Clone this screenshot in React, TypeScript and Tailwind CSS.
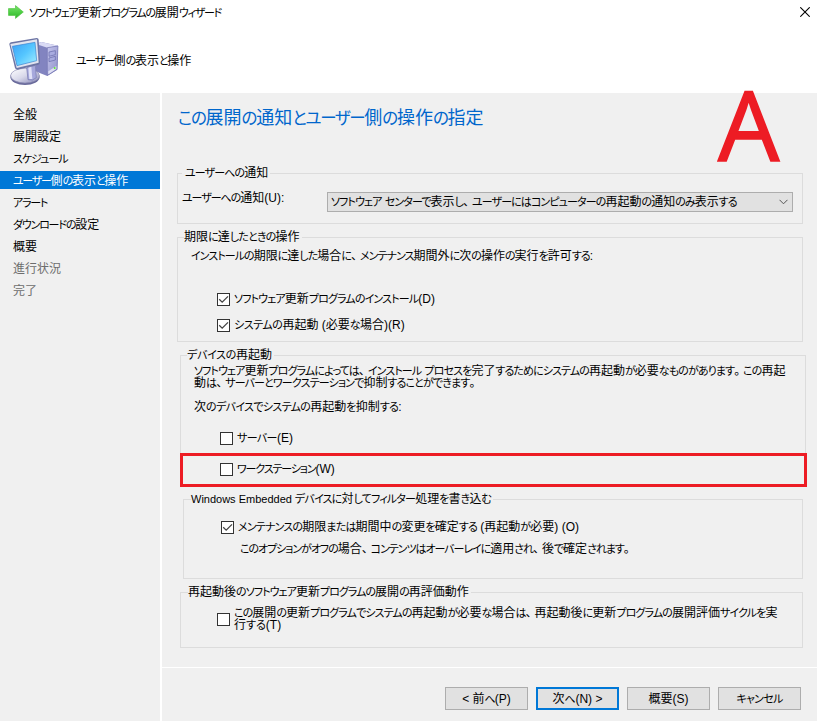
import type { ReactNode } from "react";

const steps = [
  { label: "全般", track: "", state: "done" },
  { label: "展開設定", track: "", state: "done" },
  { label: "スケジュール", track: "tracking-[-1px]", state: "done" },
  { label: "ユーザー側の表示と操作", track: "tracking-[-1.3px]", state: "current" },
  { label: "アラート", track: "tracking-[-1.2px]", state: "done" },
  { label: "ダウンロードの設定", track: "tracking-[-1.2px]", state: "done" },
  { label: "概要", track: "", state: "done" },
  { label: "進行状況", track: "", state: "pending" },
  { label: "完了", track: "", state: "pending" },
];

const stepStyles: Record<string, string> = {
  done: "text-black",
  current: "bg-[#0078d7] text-white",
  pending: "text-[#6d6d6d]",
};

// Kana are set narrower than kanji, as in a proportional UI gothic.
function Ja({ text, track = "" }: { text: string; track?: string }) {
  return (
    <>
      {text.split(/([\u3041-\u30ff]+|[、。])/).map((part, i) => {
        if (part === "、" || part === "。") {
          return (
            <span key={i} className="tracking-[-3px]">
              {part}
            </span>
          );
        }
        return i % 2 ? (
          <span key={i} className={`text-[0.917em] [font-feature-settings:'palt'] ${track}`}>
            {part}
          </span>
        ) : (
          part
        );
      })}
    </>
  );
}

function Group({
  title,
  className,
  children,
}: {
  title: ReactNode;
  className: string;
  children: ReactNode;
}) {
  return (
    <section className={`border border-[#dcdcdc] ${className}`}>
      <h2 className="-mt-2 h-[14px] w-fit bg-[#f0f0f0] pr-0.5 leading-[14px]">{title}</h2>
      {children}
    </section>
  );
}

function Check({
  checked = false,
  className = "",
  children,
}: {
  checked?: boolean;
  className?: string;
  children: ReactNode;
}) {
  return (
    <label className={`flex items-center gap-1 ${className}`}>
      <span className="flex size-[13px] shrink-0 items-center justify-center border border-[#333] bg-white">
        {checked && (
          <svg viewBox="0 0 11 11" className="size-[11px]" fill="none" stroke="#444" strokeWidth="1.3">
            <path d="M1.2 5.2 4.2 8.2 10 2.4" />
          </svg>
        )}
      </span>
      <span className="-mt-px leading-3">{children}</span>
    </label>
  );
}

function ArrowIcon() {
  return (
    <svg viewBox="0 0 16 14" className="h-[14px] w-4">
      <defs>
        <linearGradient id="arrow" x1="0" y1="0" x2="0" y2="1">
          <stop offset="0" stopColor="#7be06a" />
          <stop offset=".5" stopColor="#4fd046" />
          <stop offset="1" stopColor="#2fb32a" />
        </linearGradient>
      </defs>
      <path d="M.5 3.6h7V.6L15.3 7l-7.8 6.4V10.4h-7z" fill="url(#arrow)" stroke="#55c648" strokeWidth=".7" />
    </svg>
  );
}

function ComputerIcon() {
  return (
    <svg viewBox="0 0 210 195" className="h-[65px] w-[70px]">
      <defs>
        <linearGradient id="screen" x1="0" y1="0" x2="1" y2="1">
          <stop offset="0" stopColor="#3b9ff5" />
          <stop offset=".5" stopColor="#55c6ff" />
          <stop offset="1" stopColor="#a5f0ff" />
        </linearGradient>
        <linearGradient id="front" x1="0" y1="0" x2="1" y2="1">
          <stop offset="0" stopColor="#c5c6ee" />
          <stop offset="1" stopColor="#8f90c8" />
        </linearGradient>
        <linearGradient id="base" x1="0" y1="0" x2="1" y2="1">
          <stop offset="0" stopColor="#fff" />
          <stop offset=".5" stopColor="#d8d8ea" />
          <stop offset="1" stopColor="#8586b6" />
        </linearGradient>
      </defs>
      <path d="M108 42 124 36 174 47 172 119 142 138 106 124z" fill="#8284c0" />
      <path d="M108 42 124 36 174 47 142 53z" fill="#dadbf5" />
      <path d="M142 53 174 48 171 118 142 136z" fill="url(#front)" stroke="#7577b2" strokeWidth="2" />
      <path d="M147 66 166 62V74L147 79zM147 84 166 79V90L147 95z" fill="#a9ace0" stroke="#6467a8" strokeWidth="2" />
      <path d="M145 124 169 108V117L145 133z" fill="#dedff2" />
      <circle cx="164" cy="114" r="3" fill="#5ee833" />
      <ellipse cx="75" cy="141" rx="44" ry="24" fill="#696a9b" />
      <ellipse cx="75" cy="137" rx="43" ry="22" fill="url(#base)" stroke="#9293b8" strokeWidth="2" />
      <path d="M80 113 106 106 109 143Q98 154 84 149z" fill="#a6a8dc" stroke="#7375aa" strokeWidth="2" />
      <path d="M85 113 94 110 97 147H88z" fill="#e0e1f7" />
      <path d="M28 43Q28 38 33 37L110 24Q116 24 116 29L120 97Q120 102 115 104L53 119Q47 119 45 114z" fill="#6c74a4" />
      <path d="M31 42 111 28 116 98 50 114z" fill="#e1e4ef" />
      <path d="M37 49 105 37 110 92 51 107z" fill="url(#screen)" stroke="#3d83ce" strokeWidth="2" />
    </svg>
  );
}

function Button({ primary = false, children }: { primary?: boolean; children: ReactNode }) {
  return (
    <button
      type="button"
      className={`flex h-[23px] w-[83px] items-center justify-center whitespace-pre bg-[#e1e1e1] leading-3 ${
        primary ? "border-2 border-[#0078d7]" : "border border-[#adadad]"
      }`}
    >
      {children}
    </button>
  );
}

export default function App() {
  return (
    <div className="relative flex h-[725px] w-[817px] flex-col overflow-hidden whitespace-nowrap bg-white font-['Liberation_Sans','Noto_Sans_CJK_JP',sans-serif] text-[12px] text-black">
      <header className="h-[93px] shrink-0">
        <div className="flex h-[30px] items-start pl-2 pr-[7px]">
          <div className="mt-[5px]">
            <ArrowIcon />
          </div>
          <h1 className="ml-[5px] mt-[5px] leading-4">
            <Ja text="ソフトウェア更新プログラムの展開ウィザード" track="tracking-[-1.25px]" />
          </h1>
          <svg viewBox="0 0 10 10" className="ml-auto mt-[7px] size-[10px]" stroke="#000" strokeWidth="1.1">
            <path d="M.3.3 9.7 9.7M9.7.3.3 9.7" />
          </svg>
        </div>
        <div className="flex items-start">
          <ComputerIcon />
          <p className="ml-1.5 mt-[23px] leading-4">
            <Ja text="ユーザー側の表示と操作" track="tracking-[-1.3px]" />
          </p>
        </div>
      </header>

      <div className="flex h-[628px] shrink-0 gap-0.5">
        <nav className="w-40 shrink-0 bg-[#f0f0f0] pt-3">
          <ul className="flex flex-col gap-1">
            {steps.map((step) => (
              <li key={step.label} className={`h-[18px] pl-[13px] pt-px leading-[18px] ${stepStyles[step.state]}`}>
                <Ja text={step.label} track={step.track} />
              </li>
            ))}
          </ul>
        </nav>

        <main className="flex w-[655px] flex-col bg-[#f0f0f0]">
          <div className="h-[575px] border-b border-white pl-[15px]">
            <p className="h-20 pl-px pt-3 text-[18px] leading-[26px] text-[#0066cc]">
              <Ja text="この展開の通知とユーザー側の操作の指定" track="tracking-[-1.3px]" />
            </p>

            <Group
              className="h-[51px] w-[626px] pl-[4px]"
              title={
                <span className="ml-[3px]">
                  <Ja text="ユーザーへの通知" track="tracking-[-0.9px]" />
                </span>
              }
            >
              <div className="flex items-start">
                <span className="mt-[11px] w-[145px] leading-[14px]">
                  <Ja text="ユーザーへの通知(U):" track="tracking-[-1.05px]" />
                </span>
                <div className="mt-3 flex h-5 w-[466px] items-center justify-between border border-[#adadad] bg-[#e1e1e1] pl-[3px] pr-1">
                  <span className="leading-3">
                    <Ja
                      text="ソフトウェア センターで表示し、ユーザーにはコンピューターの再起動の通知のみ表示する"
                      track="tracking-[-0.9px]"
                    />
                  </span>
                  <svg viewBox="0 0 9 6" className="h-1.5 w-[9px]" fill="none" stroke="#555">
                    <path d="M.5.8 4.5 4.8 8.5.8" />
                  </svg>
                </div>
              </div>
            </Group>

            <Group
              className="mt-[13px] h-[105px] w-[626px] pl-1.5"
              title={<Ja text="期限に達したときの操作" track="tracking-[-0.8px]" />}
            >
              <p className="ml-[7px] mt-[5px] leading-[14px]">
                <Ja
                  text="インストールの期限に達した場合に、メンテナンス期間外に次の操作の実行を許可する:"
                  track="tracking-[-0.95px]"
                />
              </p>
              <Check checked className="ml-[33px] mt-[30px]">
                <Ja text="ソフトウェア更新プログラムのインストール(D)" track="tracking-[-0.85px]" />
              </Check>
              <Check checked className="ml-[33px] mt-[13px]">
                <Ja text="システムの再起動 (必要な場合)(R)" track="tracking-[-0.45px]" />
              </Check>
            </Group>

            <Group
              className="ml-[3px] mt-[13px] h-[131px] w-[626px] pl-1.5"
              title={<Ja text="デバイスの再起動" track="tracking-[-0.3px]" />}
            >
              <p className="ml-[7px] mt-[3px] leading-3">
                <Ja
                  text="ソフトウェア更新プログラムによっては、インストール プロセスを完了するためにシステムの再起動が必要なものがあります。この再起"
                  track="tracking-[-0.9px]"
                />
                <br />
                <Ja
                  text="動は、サーバーとワークステーションで抑制することができます。"
                  track="tracking-[-0.85px]"
                />
              </p>
              <p className="ml-[7px] mt-3 leading-3">
                <Ja text="次のデバイスでシステムの再起動を抑制する:" track="tracking-[-0.65px]" />
              </p>
              <Check className="ml-[33px] mt-[19px]">
                <Ja text="サーバー(E)" track="tracking-[-0.6px]" />
              </Check>
              <Check className="ml-[33px] mt-[18px]">
                <Ja text="ワークステーション(W)" track="tracking-[-1.15px]" />
              </Check>
            </Group>

            <Group
              className="ml-1.5 mt-[13px] h-20 w-[620px] pl-[7px]"
              title={
                <>
                  <span className="text-[11px]">Windows Embedded </span>
                  <Ja text="デバイスに対してフィルター処理を書き込む" track="tracking-[-0.8px]" />
                </>
              }
            >
              <Check checked className="ml-[30px] mt-[15px]">
                <Ja
                  text="メンテナンスの期限または期間中の変更を確定する (再起動が必要) (O)"
                  track="tracking-[-0.8px]"
                />
              </Check>
              <p className="ml-[49px] mt-2 leading-[14px]">
                <Ja
                  text="このオプションがオフの場合、コンテンツはオーバーレイに適用され、後で確定されます。"
                  track="tracking-[-1.05px]"
                />
              </p>
            </Group>

            <Group
              className="ml-[3px] mt-[13px] h-14 w-[623px] pl-[7px]"
              title={
                <Ja text="再起動後のソフトウェア更新プログラムの展開の再評価動作" track="tracking-[-0.95px]" />
              }
            >
              <Check className="ml-[29px] mt-[9px]">
                <Ja
                  text="この展開の更新プログラムでシステムの再起動が必要な場合は、再起動後に更新プログラムの展開評価サイクルを実"
                  track="tracking-[-0.88px]"
                />
                <br />
                <Ja text="行する(T)" />
              </Check>
            </Group>
          </div>

          <footer className="flex justify-end gap-2 pr-4 pt-[19px]">
            <Button>
              <Ja text="< 前へ(P)" track="tracking-[-1px]" />
            </Button>
            <Button primary>
              <Ja text="次へ(N) >" track="tracking-[-0.3px]" />
            </Button>
            <Button>
              <Ja text="概要(S)" />
            </Button>
            <Button>
              <Ja text="キャンセル" track="tracking-[-0.7px]" />
            </Button>
          </footer>
        </main>
      </div>

      <div className="absolute left-[180px] top-[453px] h-[34px] w-[627px] border-[3px] border-[#ed1c24]" />
      <span className="absolute left-[718px] top-[75px] font-['Open_Sans'] text-[97px] leading-none text-[#ed1c24] [-webkit-text-stroke:1.6px_#ed1c24]">
        A
      </span>
    </div>
  );
}
